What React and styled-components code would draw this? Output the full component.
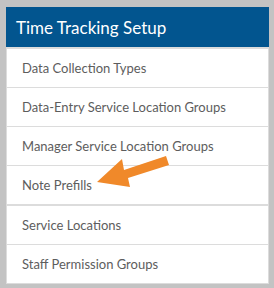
import React from 'react';
import styled, { createGlobalStyle } from 'styled-components';

const GlobalStyle = createGlobalStyle`
    body {
        margin: 0;
        background-color: #c3c3c3;
        font-family: Lato, 'Open Sans', sans-serif;
    }
`;

const Page = styled.div`
    position: relative;
    padding: 7px 5px 4px 6px;
`;

const Panel = styled.div`
    width: 263px;
    background-color: #fff;
`;

const Header = styled.div`
    height: 40px;
    display: flex;
    align-items: center;
    padding-left: 10px;
    background-color: #02558f;
    color: #fff;
    font-size: 17px;
    border-bottom: 2px solid #dcdcdc;
`;

const List = styled.ul`
    list-style: none;
    margin: 0;
    padding: 0;
    border-left: 1px solid #dcdcdc;
    border-right: 1px solid #dcdcdc;
`;

const Item = styled.li`
    height: 38px;
    display: flex;
    align-items: center;
    padding-left: 15px;
    color: #5d5d5d;
    font-size: 13px;
    border-bottom: ${props => (props.$thick ? 2 : 1)}px solid #dcdcdc;
`;

const Arrow = styled.svg`
    position: absolute;
    left: 0;
    top: 0;
`;

const items = [
    'Data Collection Types',
    'Data-Entry Service Location Groups',
    'Manager Service Location Groups',
    'Note Prefills',
    'Service Locations',
    'Staff Permission Groups',
];

export default () => (
    <Page>
        <GlobalStyle />
        <Panel>
            <Header>Time Tracking Setup</Header>
            <List>
                {items.map(name => (
                    <Item key={name} $thick={name === 'Note Prefills'}>
                        {name}
                    </Item>
                ))}
            </List>
        </Panel>
        <Arrow width="274" height="288" viewBox="0 0 274 288">
            <polygon
                points="97,182 122,159 124,170 166,156 169,165 128,178 130,187"
                fill="#f0892a"
            />
        </Arrow>
    </Page>
);
